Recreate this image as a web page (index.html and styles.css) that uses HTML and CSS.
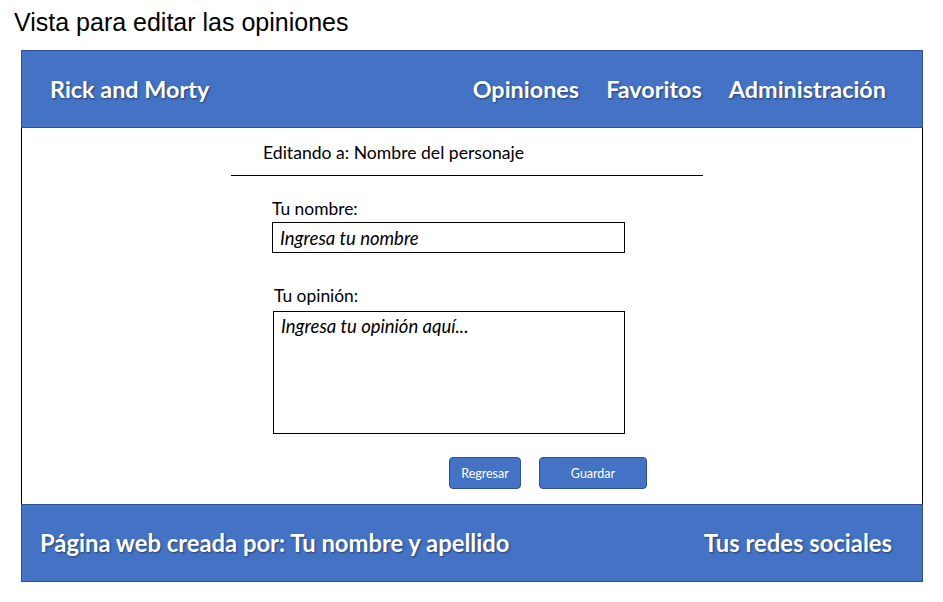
FILE: index.html
```html
<!DOCTYPE html>
<html lang="es">
<head>
<meta charset="utf-8">
<title>Vista para editar las opiniones</title>
<link rel="stylesheet" href="styles.css">
</head>
<body>
<h1 class="page-title">Vista para editar las opiniones</h1>
<div class="frame">
  <header class="topbar">
    <div class="brand">Rick and Morty</div>
    <nav class="nav">
      <a class="nav-link" href="#">Opiniones</a>
      <a class="nav-link" href="#">Favoritos</a>
      <a class="nav-link" href="#">Administración</a>
    </nav>
  </header>
  <main class="content">
    <section class="panel">
      <h2 class="panel-title">Editando a: Nombre del personaje</h2>
      <form class="form">
        <label class="field-label" for="nombre">Tu nombre:</label>
        <input class="field-input" id="nombre" type="text" placeholder="Ingresa tu nombre">
        <label class="field-label field-label-second" for="opinion">Tu opinión:</label>
        <textarea class="field-area" id="opinion" placeholder="Ingresa tu opinión aquí..."></textarea>
        <div class="actions">
          <button class="btn btn-back" type="button">Regresar</button>
          <button class="btn btn-save" type="submit">Guardar</button>
        </div>
      </form>
    </section>
  </main>
  <footer class="bottombar">
    <div class="credit">Página web creada por: Tu nombre y apellido</div>
    <div class="social">Tus redes sociales</div>
  </footer>
</div>
</body>
</html>
```
FILE: styles.css
```css
* { box-sizing: border-box; }

body {
  margin: 0;
  background: #ffffff;
  font-family: Lato, "Open Sans", sans-serif;
  color: #000;
}

.page-title {
  margin: 0;
  padding: 8px 0 0 14px;
  height: 50px;
  font-family: "Liberation Sans", Arial, sans-serif;
  font-weight: normal;
  font-size: 25px;
  line-height: 28px;
}

.frame {
  margin-left: 21px;
  width: 902px;
}

.topbar {
  height: 78px;
  background: #4472c4;
  border: 1px solid #2f528f;
  display: flex;
  align-items: center;
  justify-content: space-between;
  padding: 0 36px 0 28px;
  color: #fff;
  font-weight: bold;
  font-size: 23.4px;
  text-shadow: 1px 1px 2px rgba(0, 0, 0, 0.45);
}

.nav {
  display: flex;
  gap: 27px;
}

.nav-link {
  color: #fff;
  text-decoration: none;
}

.content {
  height: 376px;
  border-left: 1px solid #000;
  border-right: 1px solid #000;
  padding-top: 14px;
}

.panel {
  margin-left: 209px;
  width: 472px;
}

.panel-title {
  margin: 0;
  padding: 0 0 11px 32px;
  border-bottom: 1px solid #000;
  font-weight: normal;
  font-size: 17.6px;
  line-height: 22px;
}

.form {
  padding: 23px 0 0 41px;
  display: flex;
  flex-direction: column;
  align-items: flex-start;
}

.field-label {
  font-size: 17.4px;
  line-height: 20px;
  margin-bottom: 3px;
}

.field-label-second {
  margin-top: 33px;
  margin-left: 2px;
  margin-bottom: 5px;
}

.field-input,
.field-area {
  font-family: inherit;
  font-style: italic;
  font-size: 18.5px;
  color: #000;
  border: 1px solid #000;
  border-radius: 0;
  background: #fff;
  outline: none;
  padding: 2px 7px;
}

.field-input {
  width: 353px;
  height: 31px;
}

.field-area {
  width: 352px;
  height: 123px;
  margin-left: 1px;
  resize: none;
  padding-top: 3px;
}

.field-input::placeholder,
.field-area::placeholder {
  color: #000;
  opacity: 1;
}

.actions {
  display: flex;
  gap: 18px;
  margin-top: 23px;
  margin-left: 177px;
}

.btn {
  font-family: inherit;
  font-size: 12.5px;
  color: #fff;
  background: #4472c4;
  border: 1px solid #2f528f;
  border-radius: 4px;
  height: 32px;
  cursor: pointer;
}

.btn-back { width: 72px; }
.btn-save { width: 108px; }

.bottombar {
  height: 78px;
  background: #4472c4;
  border: 1px solid #2f528f;
  display: flex;
  align-items: center;
  justify-content: space-between;
  padding: 0 30px 0 18px;
  color: #fff;
  font-weight: bold;
  font-size: 23.8px;
  text-shadow: 1px 1px 2px rgba(0, 0, 0, 0.45);
}
```
